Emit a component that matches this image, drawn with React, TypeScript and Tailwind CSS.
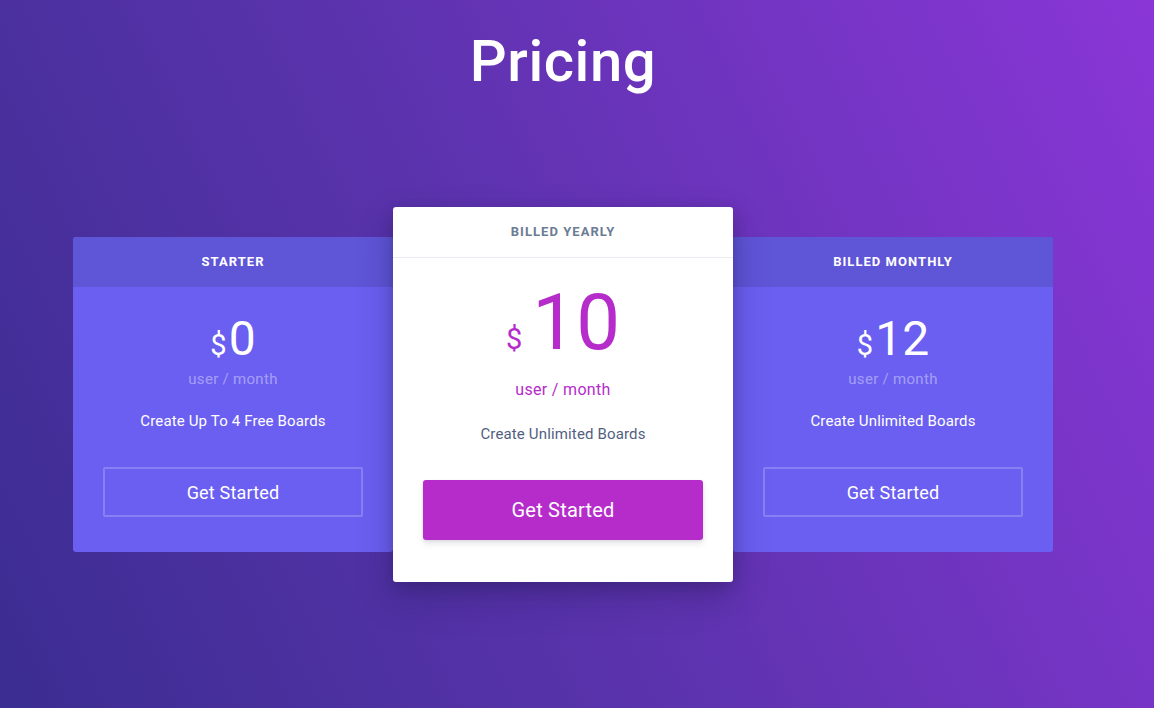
import React from "react";

const font = { fontFamily: "Roboto, 'Noto Sans', Arial, sans-serif" };

function SideCard({ title, price, desc }: { title: string; price: string; desc: string }) {
  return (
    <div className="w-[320px] rounded-[3px] overflow-hidden bg-[#6b5ff1] flex flex-col">
      <div className="h-[50px] bg-[#5f55d7] flex items-center justify-center text-white text-[13px] font-bold tracking-[0.08em]">
        {title}
      </div>
      <div className="flex flex-col items-center pt-[28px] pb-[35px]">
        <div className="flex items-baseline text-white leading-none">
          <span className="text-[29px] mr-[2px]">$</span>
          <span className="text-[48px]">{price}</span>
        </div>
        <div className="mt-[6px] text-[15px] leading-[20px] text-white/40 tracking-[0.02em]">user / month</div>
        <div className="mt-[22px] text-[15px] leading-[20px] text-white tracking-[0.01em]">{desc}</div>
        <button className="mt-[36px] w-[260px] h-[50px] rounded-[2px] border-2 border-white/20 text-white text-[18px] tracking-[0.01em]">
          Get Started
        </button>
      </div>
    </div>
  );
}

export default function App() {
  return (
    <div
      style={font}
      className="min-h-[708px] w-full bg-[linear-gradient(65deg,#3b2d91_0%,#5b33ad_45%,#8a36d7_100%)]"
    >
      <div className="w-[1126px] flex flex-col">
        <h1 className="pt-[32px] text-center text-white text-[58px] leading-none font-medium tracking-[0.01em]">
          Pricing
        </h1>
        <div className="mt-[117px] ml-[73px] flex items-center">
          <SideCard title="STARTER" price="0" desc="Create Up To 4 Free Boards" />
          <div className="relative z-10 w-[340px] bg-white rounded-[3px] flex flex-col shadow-[0_15px_35px_rgba(30,20,80,0.3),0_5px_15px_rgba(0,0,0,0.15)]">
            <div className="h-[51px] border-b border-[#e9ecf1] flex items-center justify-center text-[#6b7c93] text-[13px] font-bold tracking-[0.08em]">
              BILLED YEARLY
            </div>
            <div className="flex flex-col items-center pt-[26px] pb-[42px]">
              <div className="flex items-baseline text-[#b52ccb] leading-none">
                <span className="text-[29px] mr-[10px]">$</span>
                <span className="text-[78px] tracking-[0]">10</span>
              </div>
              <div className="mt-[17px] text-[16px] leading-[22px] text-[#b52ccb] tracking-[0.02em]">user / month</div>
              <div className="mt-[23px] text-[15px] leading-[20px] text-[#525f7f] tracking-[0.01em]">Create Unlimited Boards</div>
              <button className="mt-[36px] w-[280px] h-[60px] rounded-[3px] bg-[#b52ccb] text-white text-[20px] tracking-[0.01em] shadow-[0_4px_6px_rgba(50,50,93,0.11),0_1px_3px_rgba(0,0,0,0.08)]">
                Get Started
              </button>
            </div>
          </div>
          <SideCard title="BILLED MONTHLY" price="12" desc="Create Unlimited Boards" />
        </div>
      </div>
    </div>
  );
}
